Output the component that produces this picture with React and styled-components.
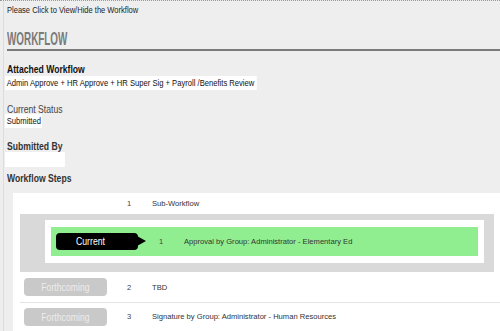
import React from "react";
import styled, { createGlobalStyle, css } from "styled-components";

const Global = createGlobalStyle`
  html, body { margin: 0; padding: 0; background: #eeeeee; }
  body { font-family: "Liberation Sans", Arial, sans-serif; color: #333; overflow: hidden; }
`;

/* Arial-Narrow look: Liberation Sans squeezed horizontally */
const narrow = css`
  transform: scaleX(0.82);
  transform-origin: left center;
`;

const Page = styled.div`
  width: 500px;
  height: 331px;
  box-sizing: border-box;
  border-top: 1px dotted #999;
  background: #eeeeee;
  overflow: hidden;
`;

const Frame = styled.div`
  margin-left: 3px;
  border-left: 1px solid #dcdcdc;
  padding-left: 3px;
  height: 100%;
`;

const Toggle = styled.div`
  ${narrow};
  font-size: 9.2px;
  line-height: 12px;
  padding-top: 3px;
  color: #222;
  white-space: nowrap;
`;

const Heading = styled.div`
  margin-top: 9px;
  border-bottom: 2px solid #7a7a7a;
  height: 24px;
`;

const HeadingText = styled.div`
  font-size: 19px;
  line-height: 28px;
  font-weight: bold;
  color: #7a7a7a;
  transform: scaleX(0.52);
  transform-origin: left center;
  white-space: nowrap;
`;

const Label = styled.div`
  ${narrow};
  width: max-content;
  font-size: 10.5px;
  line-height: 10px;
  font-weight: ${(p) => (p.$bold ? "bold" : "normal")};
  color: ${(p) => p.$color || "#222"};
  margin-top: ${(p) => p.$top || 0}px;
`;

const Value = styled.div`
  ${narrow};
  width: max-content;
  min-width: ${(p) => p.$min || 0}px;
  margin-left: -2px;
  margin-top: ${(p) => p.$top || 0}px;
  padding: 0 ${(p) => p.$padR ?? 3}px 0 2px;
  height: ${(p) => p.$h || 14}px;
  line-height: ${(p) => p.$h || 14}px;
  background: #fff;
  font-size: 9.3px;
  color: #111;
  white-space: nowrap;
  box-sizing: border-box;
`;

const Steps = styled.div`
  margin-top: 10px;
  margin-left: 6px;
  padding-left: 7px;
  background: #fff;
  height: 200px;
`;

const Row = styled.div`
  display: grid;
  grid-template-columns: 103px 25px 1fr;
  align-items: center;
  padding-left: ${(p) => p.$pad || 4}px;
  height: ${(p) => p.$h || 30}px;
  border-bottom: ${(p) => (p.$line ? "1px solid #e4e4e4" : "none")};
  box-sizing: border-box;
  font-size: 7.6px;
  color: #333;
`;

const Num = styled.span`
  color: #444;
`;

const CurrentGroup = styled.div`
  margin-right: 6px;
  background: #d9d9d9;
  padding: 6px 10px 9px 25px;
`;

const CurrentInner = styled.div`
  background: #fff;
  padding: 7px 6px;
`;

const Highlight = styled.div`
  background: #90ee90;
`;

const Badge = styled.span`
  position: relative;
  display: block;
  width: 82px;
  height: 17px;
  line-height: 17px;
  background: #000;
  border-radius: 4px;
  color: #fff;
  font-size: 10.6px;
  padding-left: 20px;
  box-sizing: border-box;
  &::after {
    content: "";
    position: absolute;
    right: -8px;
    top: 3px;
    border-left: 9px solid #000;
    border-top: 5.5px solid transparent;
    border-bottom: 5.5px solid transparent;
  }
`;

const BadgeText = styled.span`
  ${narrow};
  display: inline-block;
`;

const Pending = styled.span`
  display: block;
  width: 83px;
  height: 18px;
  line-height: 18px;
  background: #c9c9c9;
  border-radius: 4px;
  color: #ececec;
  text-align: center;
  font-size: 10.6px;
`;

const PendingText = styled.span`
  display: inline-block;
  transform: scaleX(0.82);
  transform-origin: center;
`;

export default function App() {
  return (
    <>
      <Global />
      <Page>
        <Frame>
          <Toggle>Please Click to View/Hide the Workflow</Toggle>
          <Heading>
            <HeadingText>WORKFLOW</HeadingText>
          </Heading>
          <Label $bold $top={13} $color="#111">Attached Workflow</Label>
          <Value $top={2}>Admin Approve + HR Approve + HR Super Sig + Payroll /Benefits Review</Value>
          <Label $top={14} $color="#444">Current Status</Label>
          <Value $padR={1}>Submitted</Value>
          <Label $bold $top={13} $color="#333">Submitted By</Label>
          <Value $top={1} $min={73} $h={15}></Value>
          <Label $bold $top={6} $color="#333">Workflow Steps</Label>
          <Steps>
            <Row $h={21}>
              <span />
              <Num>1</Num>
              <span>Sub-Workflow</span>
            </Row>
            <CurrentGroup>
              <CurrentInner>
                <Highlight>
                  <Row $h={29} $pad={5}>
                    <Badge>
                      <BadgeText>Current</BadgeText>
                    </Badge>
                    <Num>1</Num>
                    <span>Approval by Group: Administrator - Elementary Ed</span>
                  </Row>
                </Highlight>
              </CurrentInner>
            </CurrentGroup>
            <Row $line $h={31}>
              <Pending>
                <PendingText>Forthcoming</PendingText>
              </Pending>
              <Num>2</Num>
              <span>TBD</span>
            </Row>
            <Row $h={27}>
              <Pending>
                <PendingText>Forthcoming</PendingText>
              </Pending>
              <Num>3</Num>
              <span>Signature by Group: Administrator - Human Resources</span>
            </Row>
          </Steps>
        </Frame>
      </Page>
    </>
  );
}
